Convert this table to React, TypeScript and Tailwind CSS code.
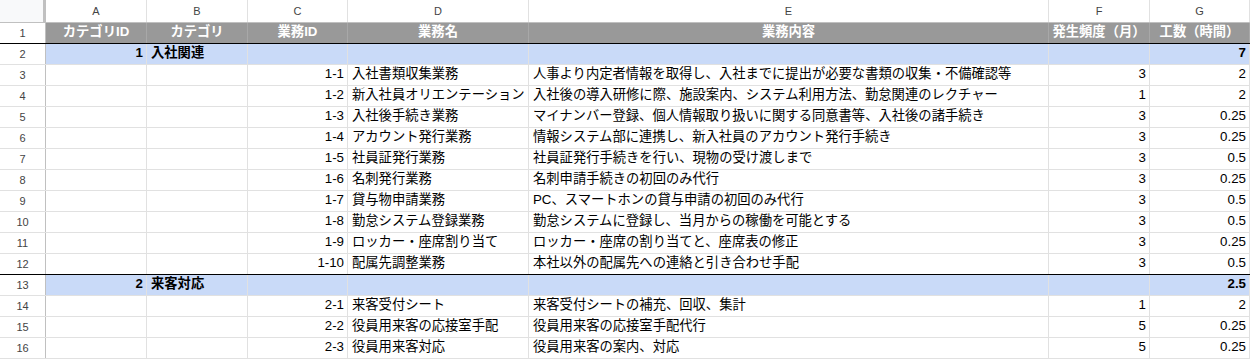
const cols = ["A", "B", "C", "D", "E", "F", "G"];
const widths = ["w-[101px]", "w-[101px]", "w-[100px]", "w-[181px]", "w-[520px]", "w-[101px]", "w-[100px]"];

type Row = { kind: "head" | "cat" | "item"; cells: string[] };

const rows: Row[] = [
  { kind: "head", cells: ["カテゴリID", "カテゴリ", "業務ID", "業務名", "業務内容", "発生頻度（月）", "工数（時間）"] },
  { kind: "cat", cells: ["1", "入社関連", "", "", "", "", "7"] },
  { kind: "item", cells: ["", "", "1-1", "入社書類収集業務", "人事より内定者情報を取得し、入社までに提出が必要な書類の収集・不備確認等", "3", "2"] },
  { kind: "item", cells: ["", "", "1-2", "新入社員オリエンテーション", "入社後の導入研修に際、施設案内、システム利用方法、勤怠関連のレクチャー", "1", "2"] },
  { kind: "item", cells: ["", "", "1-3", "入社後手続き業務", "マイナンバー登録、個人情報取り扱いに関する同意書等、入社後の諸手続き", "3", "0.25"] },
  { kind: "item", cells: ["", "", "1-4", "アカウント発行業務", "情報システム部に連携し、新入社員のアカウント発行手続き", "3", "0.25"] },
  { kind: "item", cells: ["", "", "1-5", "社員証発行業務", "社員証発行手続きを行い、現物の受け渡しまで", "3", "0.5"] },
  { kind: "item", cells: ["", "", "1-6", "名刺発行業務", "名刺申請手続きの初回のみ代行", "3", "0.25"] },
  { kind: "item", cells: ["", "", "1-7", "貸与物申請業務", "PC、スマートホンの貸与申請の初回のみ代行", "3", "0.5"] },
  { kind: "item", cells: ["", "", "1-8", "勤怠システム登録業務", "勤怠システムに登録し、当月からの稼働を可能とする", "3", "0.5"] },
  { kind: "item", cells: ["", "", "1-9", "ロッカー・座席割り当て", "ロッカー・座席の割り当てと、座席表の修正", "3", "0.25"] },
  { kind: "item", cells: ["", "", "1-10", "配属先調整業務", "本社以外の配属先への連絡と引き合わせ手配", "3", "0.5"] },
  { kind: "cat", cells: ["2", "来客対応", "", "", "", "", "2.5"] },
  { kind: "item", cells: ["", "", "2-1", "来客受付シート", "来客受付シートの補充、回収、集計", "1", "2"] },
  { kind: "item", cells: ["", "", "2-2", "役員用来客の応接室手配", "役員用来客の応接室手配代行", "5", "0.25"] },
  { kind: "item", cells: ["", "", "2-3", "役員用来客対応", "役員用来客の案内、対応", "5", "0.25"] },
];

// numeric columns right aligned: A, C, F, G
const rightCols = [0, 2, 5, 6];

export default function App() {
  return (
    <div className="w-[1250px] h-[359px] overflow-hidden bg-white font-['Liberation_Sans','Noto_Sans_CJK_JP',sans-serif] text-[13.3px] text-black">
      <div className="flex h-[23px] border-b border-[#c0c0c0]">
        <div className="w-[46px] shrink-0 bg-[#f8f9fa] border-r-[3px] border-[#c0c0c0]" />
        {cols.map((c, i) => (
          <div
            key={c}
            className={`${widths[i]} shrink-0 border-r border-[#e1e1e1] flex items-center justify-center text-[11px] text-[#444]`}
          >
            {c}
          </div>
        ))}
      </div>
      {rows.map((r, ri) => {
        const blackBottom = ri === 0 || ri === 11;
        return (
          <div
            key={ri}
            className={`flex h-[21px] border-b ${blackBottom ? "border-black" : "border-[#e1e1e1]"}`}
          >
            <div className="w-[46px] shrink-0 bg-white border-r border-[#c0c0c0] flex items-center justify-center text-[11px] text-[#444]">
              {ri + 1}
            </div>
            {r.cells.map((v, ci) => {
              const bg =
                r.kind === "head" ? "bg-[#999999] text-white font-bold justify-center" : r.kind === "cat" ? "bg-[#c9daf8]" : "bg-white";
              const align =
                r.kind === "head" ? "" : rightCols.includes(ci) ? "justify-end pr-[3px]" : "justify-start pl-[4px]";
              const bold = r.kind === "cat" && (ci === 0 || ci === 1 || ci === 6) ? "font-bold" : "";
              return (
                <div
                  key={ci}
                  className={`${widths[ci]} shrink-0 border-r ${r.kind === "head" ? "border-[#a8a8a8]" : "border-[#e1e1e1]"} flex items-end pb-[1px] whitespace-nowrap overflow-hidden ${bg} ${align} ${bold}`}
                >
                  {v}
                </div>
              );
            })}
          </div>
        );
      })}
    </div>
  );
}
